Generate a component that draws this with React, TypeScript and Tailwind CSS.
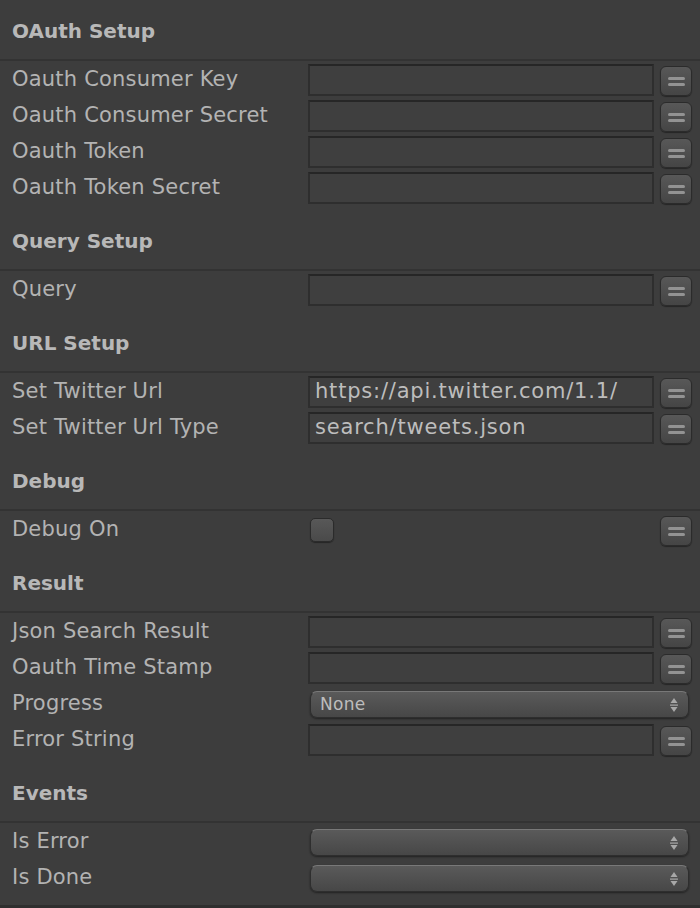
import React from 'react';

type Field =
  | { label: string; kind: 'text'; value?: string }
  | { label: string; kind: 'check' }
  | { label: string; kind: 'select'; value?: string };

type Section = { title: string; fields: Field[] };

const sections: Section[] = [
  {
    title: 'OAuth Setup',
    fields: [
      { label: 'Oauth Consumer Key', kind: 'text' },
      { label: 'Oauth Consumer Secret', kind: 'text' },
      { label: 'Oauth Token', kind: 'text' },
      { label: 'Oauth Token Secret', kind: 'text' },
    ],
  },
  { title: 'Query Setup', fields: [{ label: 'Query', kind: 'text' }] },
  {
    title: 'URL Setup',
    fields: [
      { label: 'Set Twitter Url', kind: 'text', value: 'https://api.twitter.com/1.1/' },
      { label: 'Set Twitter Url Type', kind: 'text', value: 'search/tweets.json' },
    ],
  },
  { title: 'Debug', fields: [{ label: 'Debug On', kind: 'check' }] },
  {
    title: 'Result',
    fields: [
      { label: 'Json Search Result', kind: 'text' },
      { label: 'Oauth Time Stamp', kind: 'text' },
      { label: 'Progress', kind: 'select', value: 'None' },
      { label: 'Error String', kind: 'text' },
    ],
  },
  {
    title: 'Events',
    fields: [
      { label: 'Is Error', kind: 'select' },
      { label: 'Is Done', kind: 'select' },
    ],
  },
];

// the little "=" context button at the end of each row
const MenuButton = () => (
  <div className="w-[32px] h-[30px] rounded-[6px] border border-[#2b2b2b] bg-gradient-to-b from-[#585858] to-[#454545] shadow-[0_1px_1px_rgba(0,0,0,0.4)] flex flex-col items-center justify-center gap-[3px]">
    <div className="w-[17px] h-[3px] rounded-full bg-[#939393]" />
    <div className="w-[17px] h-[3px] rounded-full bg-[#939393]" />
  </div>
);

const SelectArrows = () => (
  <svg width="10" height="16" viewBox="0 0 10 16" className="shrink-0">
    <path d="M5 1 L8.5 6 H1.5 Z" fill="#a8a8a8" />
    <rect x="1" y="7.5" width="8" height="1.2" fill="#a8a8a8" />
    <path d="M5 15 L8.5 10 H1.5 Z" fill="#a8a8a8" />
  </svg>
);

const Row = ({ field }: { field: Field }) => (
  <div className="h-[36px] flex items-start pt-[3px]">
    <div className="w-[308px] h-[32px] flex items-center pl-[12px] text-[21px] tracking-[0.2px] text-[#b3b3b3] whitespace-nowrap">
      {field.label}
    </div>
    {field.kind === 'text' && (
      <>
        <div className="w-[346px] h-[32px] border-2 border-[#2e2e2e] border-t-[#262626] bg-[#3f3f3f] flex items-center pl-[5px] text-[21px] tracking-[0.8px] text-[#bdbdbd] whitespace-nowrap overflow-hidden">
          {field.value}
        </div>
        <div className="ml-[6px] mt-[2px]">
          <MenuButton />
        </div>
      </>
    )}
    {field.kind === 'check' && (
      <>
        <div className="w-[346px] h-[32px] flex items-center pl-[2px]">
          <div className="w-[24px] h-[24px] rounded-[5px] border border-[#2b2b2b] bg-gradient-to-b from-[#585858] to-[#4a4a4a] shadow-[0_1px_1px_rgba(0,0,0,0.4)]" />
        </div>
        <div className="ml-[6px] mt-[2px]">
          <MenuButton />
        </div>
      </>
    )}
    {field.kind === 'select' && (
      <div className="ml-[2px] mt-[3px] w-[379px] h-[27px] rounded-[7px] border border-[#2e2e2e] border-t-[#787878] bg-gradient-to-b from-[#5a5a5a] to-[#474747] shadow-[0_1px_2px_rgba(0,0,0,0.45)] flex items-center justify-between pl-[9px] pr-[9px] text-[17px] tracking-[0.3px] text-[#bdbdbd]">
        <span>{field.value}</span>
        <SelectArrows />
      </div>
    )}
  </div>
);

export default function App() {
  return (
    <div
      className="w-[700px] h-[908px] overflow-hidden bg-[#3d3d3d] border-b-[3px] border-[#2f2f2f]"
      style={{ fontFamily: '"DejaVu Sans", "Noto Sans", sans-serif' }}
    >
      {sections.map((section, idx) => (
        <div key={section.title}>
          <div
            className={`flex items-end border-b-2 border-[#333333] ${
              idx === 0 ? 'h-[61px]' : 'h-[66px]'
            }`}
          >
            <div className="pl-[12px] pb-[13px] text-[20px] font-bold text-[#b8b8b8]">
              {section.title}
            </div>
          </div>
          {section.fields.map((field) => (
            <Row key={field.label} field={field} />
          ))}
        </div>
      ))}
    </div>
  );
}
